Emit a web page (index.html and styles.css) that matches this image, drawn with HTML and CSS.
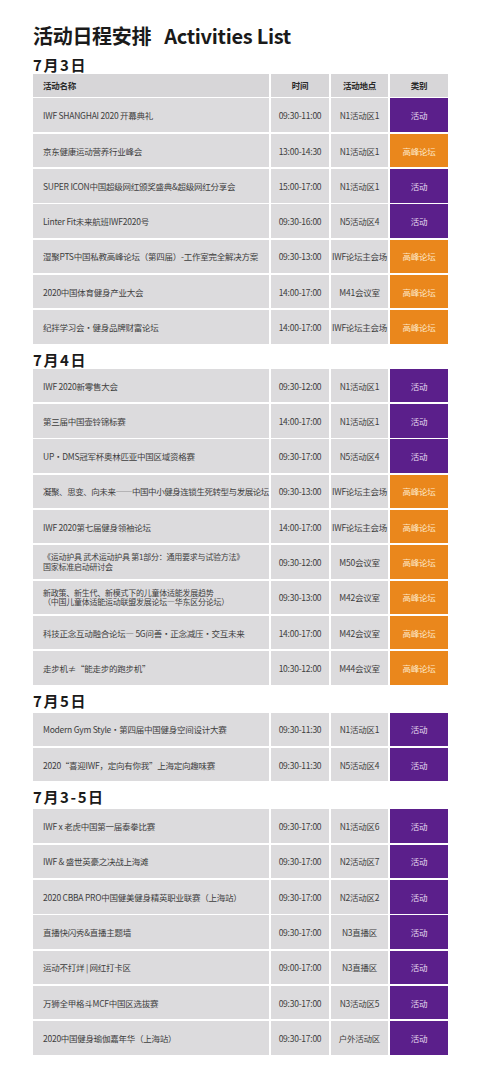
FILE: index.html
```html
<!DOCTYPE html>
<html lang="zh-CN">
<head>
<meta charset="utf-8">
<title>活动日程安排 Activities List</title>
<link rel="stylesheet" href="styles.css">
</head>
<body>
<main class="page">
  <h1 class="title"><span class="title-cn">活动日程安排</span><span class="title-en">Activities List</span></h1>

  <section class="day">
    <h2 class="day-title">7月3日</h2>
    <div class="table">
      <div class="row head"><div class="cell name">活动名称</div><div class="cell">时间</div><div class="cell">活动地点</div><div class="cell">类别</div></div>
      <div class="row"><div class="cell name">IWF SHANGHAI 2020 开幕典礼</div><div class="cell">09:30-11:00</div><div class="cell">N1活动区1</div><div class="cell cat act">活动</div></div>
      <div class="row"><div class="cell name">京东健康运动营养行业峰会</div><div class="cell">13:00-14:30</div><div class="cell">N1活动区1</div><div class="cell cat forum">高峰论坛</div></div>
      <div class="row"><div class="cell name">SUPER ICON中国超级网红颁奖盛典&amp;超级网红分享会</div><div class="cell">15:00-17:00</div><div class="cell">N1活动区1</div><div class="cell cat act">活动</div></div>
      <div class="row"><div class="cell name">Linter Fit未来航班IWF2020号</div><div class="cell">09:30-16:00</div><div class="cell">N5活动区4</div><div class="cell cat act">活动</div></div>
      <div class="row"><div class="cell name">湿聚PTS中国私教高峰论坛（第四届）-工作室完全解决方案</div><div class="cell">09:30-13:00</div><div class="cell">IWF论坛主会场</div><div class="cell cat forum">高峰论坛</div></div>
      <div class="row"><div class="cell name">2020中国体育健身产业大会</div><div class="cell">14:00-17:00</div><div class="cell">M41会议室</div><div class="cell cat forum">高峰论坛</div></div>
      <div class="row"><div class="cell name">纪拌学习会•健身品牌财富论坛</div><div class="cell">14:00-17:00</div><div class="cell">IWF论坛主会场</div><div class="cell cat forum">高峰论坛</div></div>
    </div>
  </section>

  <section class="day">
    <h2 class="day-title">7月4日</h2>
    <div class="table">
      <div class="row"><div class="cell name">IWF 2020新零售大会</div><div class="cell">09:30-12:00</div><div class="cell">N1活动区1</div><div class="cell cat act">活动</div></div>
      <div class="row"><div class="cell name">第三届中国壶铃锦标赛</div><div class="cell">14:00-17:00</div><div class="cell">N1活动区1</div><div class="cell cat act">活动</div></div>
      <div class="row"><div class="cell name">UP•DMS冠军杯奥林匹亚中国区域资格赛</div><div class="cell">09:30-17:00</div><div class="cell">N5活动区4</div><div class="cell cat act">活动</div></div>
      <div class="row"><div class="cell name tight">凝聚、思变、向未来——中国中小健身连锁生死转型与发展论坛</div><div class="cell">09:30-13:00</div><div class="cell">IWF论坛主会场</div><div class="cell cat forum">高峰论坛</div></div>
      <div class="row"><div class="cell name">IWF 2020第七届健身领袖论坛</div><div class="cell">14:00-17:00</div><div class="cell">IWF论坛主会场</div><div class="cell cat forum">高峰论坛</div></div>
      <div class="row"><div class="cell name"><span class="lines"><span class="line">《运动护具 武术运动护具 第1部分：通用要求与试验方法》</span><span class="line">国家标准启动研讨会</span></span></div><div class="cell">09:30-12:00</div><div class="cell">M50会议室</div><div class="cell cat forum">高峰论坛</div></div>
      <div class="row"><div class="cell name"><span class="lines"><span class="line">新政策、新生代、新模式下的儿童体适能发展趋势</span><span class="line">（中国儿童体适能运动联盟发展论坛—华东区分论坛）</span></span></div><div class="cell">09:30-13:00</div><div class="cell">M42会议室</div><div class="cell cat forum">高峰论坛</div></div>
      <div class="row"><div class="cell name">科技正念互动融合论坛— 5G问善•正念减压•交互未来</div><div class="cell">14:00-17:00</div><div class="cell">M42会议室</div><div class="cell cat forum">高峰论坛</div></div>
      <div class="row"><div class="cell name">走步机≠“能走步的跑步机”</div><div class="cell">10:30-12:00</div><div class="cell">M44会议室</div><div class="cell cat forum">高峰论坛</div></div>
    </div>
  </section>

  <section class="day spaced">
    <h2 class="day-title">7月5日</h2>
    <div class="table">
      <div class="row"><div class="cell name">Modern Gym Style•第四届中国健身空间设计大赛</div><div class="cell">09:30-11:30</div><div class="cell">N1活动区1</div><div class="cell cat act">活动</div></div>
      <div class="row"><div class="cell name">2020“喜迎IWF，定向有你我”上海定向趣味赛</div><div class="cell">09:30-11:30</div><div class="cell">N5活动区4</div><div class="cell cat act">活动</div></div>
    </div>
  </section>

  <section class="day spaced">
    <h2 class="day-title">7月3-5日</h2>
    <div class="table">
      <div class="row"><div class="cell name">IWF x 老虎中国第一届泰拳比赛</div><div class="cell">09:30-17:00</div><div class="cell">N1活动区6</div><div class="cell cat act">活动</div></div>
      <div class="row"><div class="cell name">IWF &amp; 盛世英豪之决战上海滩</div><div class="cell">09:30-17:00</div><div class="cell">N2活动区7</div><div class="cell cat act">活动</div></div>
      <div class="row"><div class="cell name">2020 CBBA PRO中国健美健身精英职业联赛（上海站）</div><div class="cell">09:30-17:00</div><div class="cell">N2活动区2</div><div class="cell cat act">活动</div></div>
      <div class="row"><div class="cell name">直播快闪秀&amp;直播主题墙</div><div class="cell">09:30-17:00</div><div class="cell">N3直播区</div><div class="cell cat act">活动</div></div>
      <div class="row"><div class="cell name">运动不打烊 | 网红打卡区</div><div class="cell">09:00-17:00</div><div class="cell">N3直播区</div><div class="cell cat act">活动</div></div>
      <div class="row"><div class="cell name">万狮全甲格斗MCF中国区选拔赛</div><div class="cell">09:30-17:00</div><div class="cell">N3活动区5</div><div class="cell cat act">活动</div></div>
      <div class="row"><div class="cell name">2020中国健身瑜伽嘉年华（上海站）</div><div class="cell">09:30-17:00</div><div class="cell">户外活动区</div><div class="cell cat act">活动</div></div>
    </div>
  </section>
</main>
</body>
</html>
```

FILE: styles.css
```css
* { box-sizing: border-box; }

html, body {
  margin: 0;
  padding: 0;
  background: #ffffff;
}

body {
  font-family: "Noto Sans CJK SC", "Noto Sans", sans-serif;
  color: #3c3c3c;
}

.page {
  width: 480px;
  padding: 24px 32px 0 33px;
}

.title {
  margin: 0;
  height: 24px;
  font-size: 20px;
  line-height: 24px;
  font-weight: 700;
  color: #1a1a1a;
  white-space: nowrap;
  display: flex;
  gap: 13px;
  letter-spacing: -0.3px;
}

.day {
  margin-top: 7px;
}

.day:first-of-type {
  margin-top: 8px;
}

.day-title {
  margin: 0;
  height: 18px;
  font-size: 15px;
  line-height: 18px;
  font-weight: 700;
  color: #1a1a1a;
  letter-spacing: 1.6px;
}

.day.spaced .day-title {
  margin-top: 1px;
  margin-bottom: 3px;
}

.table {
  width: 415px;
  display: flex;
  flex-direction: column;
  gap: 1.8px;
}

.row {
  display: grid;
  grid-template-columns: 236px 58px 57px 58px;
  column-gap: 2px;
  height: 33.5px;
}

.row.head {
  height: 22.5px;
  margin-bottom: 0.2px;
}

.cell {
  background: #dcdbdd;
  font-size: 8.5px;
  line-height: 10px;
  display: flex;
  align-items: center;
  justify-content: center;
  white-space: nowrap;
  color: #3e3e3e;
  letter-spacing: -0.25px;
}

.cell.name {
  justify-content: flex-start;
  padding-left: 10px;
}

.cell.tight {
  letter-spacing: -0.45px;
}

.lines {
  display: flex;
  flex-direction: column;
  gap: 0;
}

.line {
  display: block;
  font-size: 8px;
  line-height: 9.6px;
}

.head .cell {
  background: #d7d6d8;
  font-weight: 700;
  color: #2a2a2a;
}

.cat.act {
  background: #5b1f8b;
  color: #e6dcef;
}

.cat.forum {
  background: #ea871c;
  color: #fde7c8;
}
```
